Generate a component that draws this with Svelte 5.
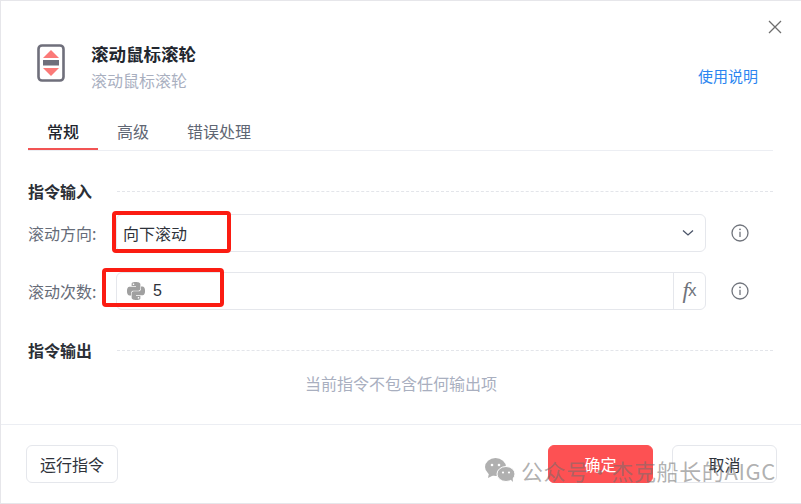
<script>
	const tabs = ['常规', '高级', '错误处理'];
	let current = 0;
</script>

<div class="dialog">
	<button class="close" aria-label="close">
		<svg width="14" height="14" viewBox="0 0 14 14"><path d="M1 1l12 12M13 1L1 13" stroke="#6e6e6e" stroke-width="1.3" fill="none"/></svg>
	</button>

	<div class="head">
		<svg class="logo" width="28" height="38" viewBox="0 0 28 38">
			<rect x="1.500" y="1.500" width="25" height="35" rx="3.500" fill="#fff" stroke="#6f6f7b" stroke-width="2.600"/>
			<path d="M14 6l8 8H6z" fill="#fb7a78"/>
			<rect x="6" y="16" width="16" height="5.500" fill="#6f6f7b"/>
			<path d="M14 32l-8-8h16z" fill="#fb7a78"/>
		</svg>
		<div class="titles">
			<div class="title">滚动鼠标滚轮</div>
			<div class="sub">滚动鼠标滚轮</div>
		</div>
		<a class="help" href="#help">使用说明</a>
	</div>

	<div class="tabs">
		{#each tabs as t, i}
			<div class="tab" class:current={i === current}>{t}</div>
		{/each}
	</div>

	<div class="section">
		<span>指令输入</span><i></i>
	</div>

	<div class="row first">
		<label for="dir">滚动方向:</label>
		<div class="field" id="dir">
			<span class="val">向下滚动</span>
			<svg class="chev" width="12" height="8" viewBox="0 0 12 8"><path d="M1 1.500l5 4.500 5-4.500" stroke="#4a5468" stroke-width="1.300" fill="none"/></svg>
			<div class="mark mark-a"></div>
		</div>
		<svg class="info" width="18" height="18" viewBox="0 0 18 18">
			<circle cx="9" cy="9" r="8" fill="none" stroke="#70747c" stroke-width="1.300"/>
			<path d="M9 7.800v5.200" stroke="#70747c" stroke-width="1.300"/><circle cx="9" cy="5.300" r="0.900" fill="#70747c"/>
		</svg>
	</div>

	<div class="row second">
		<label for="cnt">滚动次数:</label>
		<div class="field" id="cnt">
			<svg class="py" width="18" height="18" viewBox="0 0 24 24">
				<path fill="#a0a0a0" d="M14.250.18l.9.2.73.26.59.3.45.32.34.34.25.34.16.33.1.3.04.26.02.2-.01.13V8.500l-.05.63-.13.55-.21.46-.26.38-.3.31-.33.25-.35.19-.35.14-.33.1-.3.07-.26.04-.21.02H8.770l-.69.05-.59.14-.5.22-.41.27-.33.32-.27.35-.2.36-.15.37-.1.35-.07.32-.04.27-.02.21v3.060H3.170l-.21-.03-.28-.07-.32-.12-.35-.18-.36-.26-.36-.36-.35-.46-.32-.59-.28-.73-.21-.88-.14-1.050-.05-1.230.06-1.220.16-1.040.24-.87.32-.71.36-.57.4-.44.42-.33.42-.24.4-.16.36-.1.32-.05.24-.01h.16l.06.01h8.160v-.83H6.180l-.01-2.750-.02-.37.05-.34.11-.31.17-.28.25-.26.31-.23.38-.2.44-.18.51-.15.58-.12.64-.1.71-.06.77-.04.84-.02 1.270.05zm-6.300 1.980l-.23.33-.08.41.08.41.23.34.33.22.41.09.41-.09.33-.22.23-.34.08-.41-.08-.41-.23-.33-.33-.22-.41-.09-.41.09zm13.090 3.950l.28.06.32.12.35.18.36.27.36.35.35.47.32.59.28.73.21.88.14 1.040.05 1.230-.06 1.230-.16 1.040-.24.86-.32.71-.36.57-.4.45-.42.33-.42.24-.4.16-.36.09-.32.05-.24.02-.16-.01h-8.220v.82h5.840l.01 2.760.02.36-.05.34-.11.31-.17.29-.25.25-.31.24-.38.2-.44.17-.51.15-.58.13-.64.09-.71.07-.77.04-.84.01-1.270-.04-1.070-.14-.9-.2-.73-.25-.59-.3-.45-.33-.34-.34-.25-.34-.16-.33-.1-.3-.04-.25-.02-.2.01-.13v-5.340l.05-.64.13-.54.21-.46.26-.38.3-.32.33-.24.35-.2.35-.14.33-.1.3-.06.26-.04.21-.02.13-.01h5.840l.69-.05.59-.14.5-.21.41-.28.33-.32.27-.35.2-.36.15-.36.1-.35.07-.32.04-.28.02-.21V6.070h2.090l.14.01zm-6.470 14.250l-.23.33-.08.41.08.41.23.33.33.23.41.08.41-.08.33-.23.23-.33.08-.41-.08-.41-.23-.33-.33-.23-.41-.08-.41.08z"/>
			</svg>
			<span class="val num">5</span>
			<div class="fx"><em>f</em><span>x</span></div>
			<div class="mark mark-b"></div>
		</div>
		<svg class="info" width="18" height="18" viewBox="0 0 18 18">
			<circle cx="9" cy="9" r="8" fill="none" stroke="#70747c" stroke-width="1.300"/>
			<path d="M9 7.800v5.200" stroke="#70747c" stroke-width="1.300"/><circle cx="9" cy="5.300" r="0.900" fill="#70747c"/>
		</svg>
	</div>

	<div class="section out">
		<span>指令输出</span><i></i>
	</div>
	<div class="empty">当前指令不包含任何输出项</div>

	<div class="foot">
		<button class="btn">运行指令</button>
		<div class="right">
			<button class="btn primary">确定</button>
			<button class="btn wide">取消</button>
		</div>
	</div>

	<div class="wm">
		<svg width="32" height="26" viewBox="0 0 32 26">
			<ellipse cx="11.500" cy="10" rx="10.500" ry="9" fill="#b0b0b0"/>
			<path d="M5 16l-1 5 6-3z" fill="#b0b0b0"/>
			<ellipse cx="22" cy="17" rx="9" ry="7.500" fill="#b0b0b0" stroke="#fff" stroke-width="1"/>
			<path d="M26 22l3 3-.5-5z" fill="#b0b0b0"/>
			<circle cx="8" cy="8" r="1.300" fill="#fff"/><circle cx="15" cy="8" r="1.300" fill="#fff"/>
			<circle cx="19" cy="15.500" r="1.100" fill="#fff"/><circle cx="25" cy="15.500" r="1.100" fill="#fff"/>
		</svg>
		<span>公众号·杰克船长的AIGC</span>
	</div>
</div>

<style>
:global(body) {
	background: #fff;
}
.dialog {
	position: relative;
	box-sizing: border-box;
	width: 801px;
	height: 504px;
	overflow: hidden;
	background: #fff;
	border-top: 1px solid #e6e6ea;
	border-left: 1px solid #e6e6ea;
	border-bottom: 1px solid #e6e6ea;
	padding: 0 27px;
	font-family: "Noto Sans CJK SC", "Liberation Sans", sans-serif;
	color: #5f6673;
	font-size: 16px;
}
.close {
	position: absolute;
	top: 19px;
	right: 19px;
	padding: 0;
	border: 0;
	background: none;
	line-height: 0;
}
.head {
	display: flex;
	align-items: center;
	padding: 43px 16px 0 9px;
	height: 38px;
}
.titles {
	margin-left: 26px;
	margin-top: 8px;
	flex: 1;
}
.title {
	font-size: 17.500px;
	font-weight: 700;
	color: #22262e;
	line-height: 24px;
}
.sub {
	font-size: 16px;
	color: #a9afbf;
	line-height: 24px;
	margin-top: 2px;
}
.help {
	color: #2b85f0;
	font-size: 15px;
	text-decoration: none;
	margin-top: 24px;
}
.tabs {
	display: flex;
	margin-top: 27px;
	width: 745px;
	height: 41px;
	border-bottom: 1px solid #eceef3;
}
.tab {
	padding: 10px 19px 0;
	line-height: 24px;
	height: 41px;
	box-sizing: border-box;
	font-size: 16px;
}
.tab.current {
	color: #22262e;
	font-weight: 500;
	border-bottom: 2px solid #f25454;
}
.section {
	display: flex;
	align-items: center;
	margin-top: 29px;
	width: 745px;
	color: #2b2f36;
	font-size: 16px;
	font-weight: 700;
	line-height: 22px;
}
.section i {
	flex: 1;
	margin-left: 25px;
	border-top: 1px dashed #e3e5ea;
}
.section.out {
	margin-top: 29px;
}
.row {
	display: flex;
	align-items: center;
	height: 38px;
}
.row.first {
	margin-top: 12px;
}
.row.second {
	margin-top: 20px;
}
label {
	width: 88px;
	flex: none;
	font-size: 16px;
	color: #666c78;
}
.field {
	position: relative;
	display: flex;
	align-items: center;
	box-sizing: border-box;
	width: 590px;
	height: 38px;
	border: 1px solid #e5e7ec;
	border-radius: 6px;
	padding-left: 6px;
}
.val {
	flex: 1;
	color: #2e323a;
	font-size: 16px;
}
.num {
	font-family: "Liberation Sans", sans-serif;
	font-size: 16px;
}
.chev {
	margin-right: 11px;
}
.py {
	margin: 0 8px 0 4px;
}
.fx {
	width: 31px;
	height: 36px;
	display: flex;
	align-items: center;
	justify-content: center;
	border-left: 1px solid #e5e7ec;
	color: #70747c;
	font-family: "Liberation Serif", serif;
	font-size: 23px;
}
.fx span {
	font-family: "Liberation Sans", sans-serif;
	font-size: 17px;
	margin-left: -1px;
}
.info {
	margin-left: 25px;
}
.mark {
	position: absolute;
	box-sizing: border-box;
	border: 4px solid #fb1c12;
	border-radius: 4px;
}
.mark-a {
	left: -5px;
	top: -4px;
	width: 119px;
	height: 42px;
}
.mark-b {
	left: -15px;
	top: -5px;
	width: 122px;
	height: 39px;
}
.empty {
	margin-top: 11px;
	text-align: center;
	color: #a9afbf;
	font-size: 16px;
	line-height: 22px;
}
.foot {
	position: absolute;
	left: 0;
	right: 0;
	bottom: 0;
	height: 79px;
	box-sizing: border-box;
	border-top: 1px solid #eceef3;
	padding: 20px 24px 0 25px;
	display: flex;
	justify-content: space-between;
	align-items: flex-start;
}
.right {
	display: flex;
	gap: 19px;
}
.btn {
	height: 38px;
	width: 92px;
	border: 1px solid #e5e7ec;
	border-radius: 6px;
	background: #fff;
	color: #2e323a;
	font-family: inherit;
	font-size: 16px;
	padding: 0;
}
.btn.wide {
	width: 105px;
}
.btn.primary {
	width: 105px;
	background: #fd5153;
	border-color: #fd5153;
	color: #fff;
}
.wm {
	position: absolute;
	left: 483px;
	top: 453px;
	display: flex;
	align-items: center;
	gap: 5px;
	color: rgba(110, 110, 110, 0.55);
	font-size: 22px;
	letter-spacing: 0.6px;
	white-space: nowrap;
}
</style>
